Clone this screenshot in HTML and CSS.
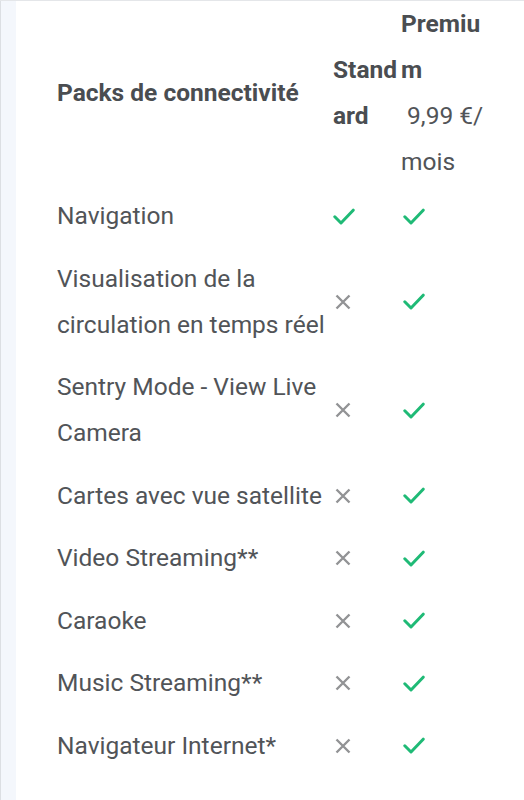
FILE: index.html
```html
<!DOCTYPE html>
<html>
<head>
  <title>Packs de connectivité</title>
  <link rel="stylesheet" href="styles.css">
</head>
<body>
  <div class="page">
    <div class="rail"></div>
    <div class="content">
      <table class="packs">
        <colgroup>
          <col class="col-name">
          <col class="col-std">
          <col class="col-prem">
        </colgroup>
        <thead>
          <tr>
            <th class="name-head">Packs de connectivité</th>
            <th class="plan">Standard</th>
            <th class="plan">Premium<span class="price">&nbsp;9,99 €/mois</span></th>
          </tr>
        </thead>
        <tbody>
          <tr>
            <td>Navigation</td>
            <td><svg class="ico ico-yes" viewBox="0 0 22 17"><polyline points="1.8,8.8 8,15 20.2,2.2"/></svg></td>
            <td><svg class="ico ico-yes" viewBox="0 0 22 17"><polyline points="1.8,8.8 8,15 20.2,2.2"/></svg></td>
          </tr>
          <tr>
            <td>Visualisation de la circulation en temps réel</td>
            <td><svg class="ico ico-no" viewBox="0 0 16 16"><path d="M1.5 1.5 L14.5 14.5 M14.5 1.5 L1.5 14.5"/></svg></td>
            <td><svg class="ico ico-yes" viewBox="0 0 22 17"><polyline points="1.8,8.8 8,15 20.2,2.2"/></svg></td>
          </tr>
          <tr>
            <td>Sentry Mode - View Live Camera</td>
            <td><svg class="ico ico-no" viewBox="0 0 16 16"><path d="M1.5 1.5 L14.5 14.5 M14.5 1.5 L1.5 14.5"/></svg></td>
            <td><svg class="ico ico-yes" viewBox="0 0 22 17"><polyline points="1.8,8.8 8,15 20.2,2.2"/></svg></td>
          </tr>
          <tr>
            <td>Cartes avec vue satellite</td>
            <td><svg class="ico ico-no" viewBox="0 0 16 16"><path d="M1.5 1.5 L14.5 14.5 M14.5 1.5 L1.5 14.5"/></svg></td>
            <td><svg class="ico ico-yes" viewBox="0 0 22 17"><polyline points="1.8,8.8 8,15 20.2,2.2"/></svg></td>
          </tr>
          <tr>
            <td>Video Streaming**</td>
            <td><svg class="ico ico-no" viewBox="0 0 16 16"><path d="M1.5 1.5 L14.5 14.5 M14.5 1.5 L1.5 14.5"/></svg></td>
            <td><svg class="ico ico-yes" viewBox="0 0 22 17"><polyline points="1.8,8.8 8,15 20.2,2.2"/></svg></td>
          </tr>
          <tr>
            <td>Caraoke</td>
            <td><svg class="ico ico-no" viewBox="0 0 16 16"><path d="M1.5 1.5 L14.5 14.5 M14.5 1.5 L1.5 14.5"/></svg></td>
            <td><svg class="ico ico-yes" viewBox="0 0 22 17"><polyline points="1.8,8.8 8,15 20.2,2.2"/></svg></td>
          </tr>
          <tr>
            <td>Music Streaming**</td>
            <td><svg class="ico ico-no" viewBox="0 0 16 16"><path d="M1.5 1.5 L14.5 14.5 M14.5 1.5 L1.5 14.5"/></svg></td>
            <td><svg class="ico ico-yes" viewBox="0 0 22 17"><polyline points="1.8,8.8 8,15 20.2,2.2"/></svg></td>
          </tr>
          <tr>
            <td>Navigateur Internet*</td>
            <td><svg class="ico ico-no" viewBox="0 0 16 16"><path d="M1.5 1.5 L14.5 14.5 M14.5 1.5 L1.5 14.5"/></svg></td>
            <td><svg class="ico ico-yes" viewBox="0 0 22 17"><polyline points="1.8,8.8 8,15 20.2,2.2"/></svg></td>
          </tr>
        </tbody>
      </table>
    </div>
  </div>
</body>
</html>
```
FILE: styles.css
```css
body {
  margin: 0;
  font-family: Roboto, "Liberation Sans", Arial, sans-serif;
  background-color: #fff;
  color: #515458;
}

.page {
  display: flex;
  min-height: 800px;
  border-top: 1px solid #e4e6e9;
  box-sizing: border-box;
}

.rail {
  width: 15px;
  flex: none;
  background-color: #f4f7fc;
  border-left: 1px solid #dcdfe3;
}

.content {
  flex: 1;
  padding-left: 41px;
}

.packs {
  border-collapse: collapse;
  table-layout: fixed;
  width: 428px;
  font-size: 24.5px;
  line-height: 46px;
}

.col-name {
  width: 276px;
}

.col-std {
  width: 68px;
}

.col-prem {
  width: 84px;
}

.packs th {
  padding: 0;
  text-align: left;
  vertical-align: middle;
  font-weight: 700;
  color: #4a4d51;
  word-break: break-all;
}

.packs th.name-head {
  word-break: normal;
}

.price {
  display: block;
  font-weight: 400;
  color: #515458;
}

.packs td {
  padding: 8.25px 0;
  vertical-align: middle;
}

.ico {
  display: block;
  fill: none;
  stroke-linecap: round;
  stroke-linejoin: round;
}

.ico-yes {
  width: 22px;
  height: 17px;
  stroke: #1fba76;
  stroke-width: 3;
}

.ico-no {
  width: 16px;
  height: 16px;
  margin-left: 2px;
  stroke: #929395;
  stroke-width: 2.4;
  stroke-linecap: butt;
}

.packs td:nth-child(3) .ico-yes {
  margin-left: 2px;
}
```
